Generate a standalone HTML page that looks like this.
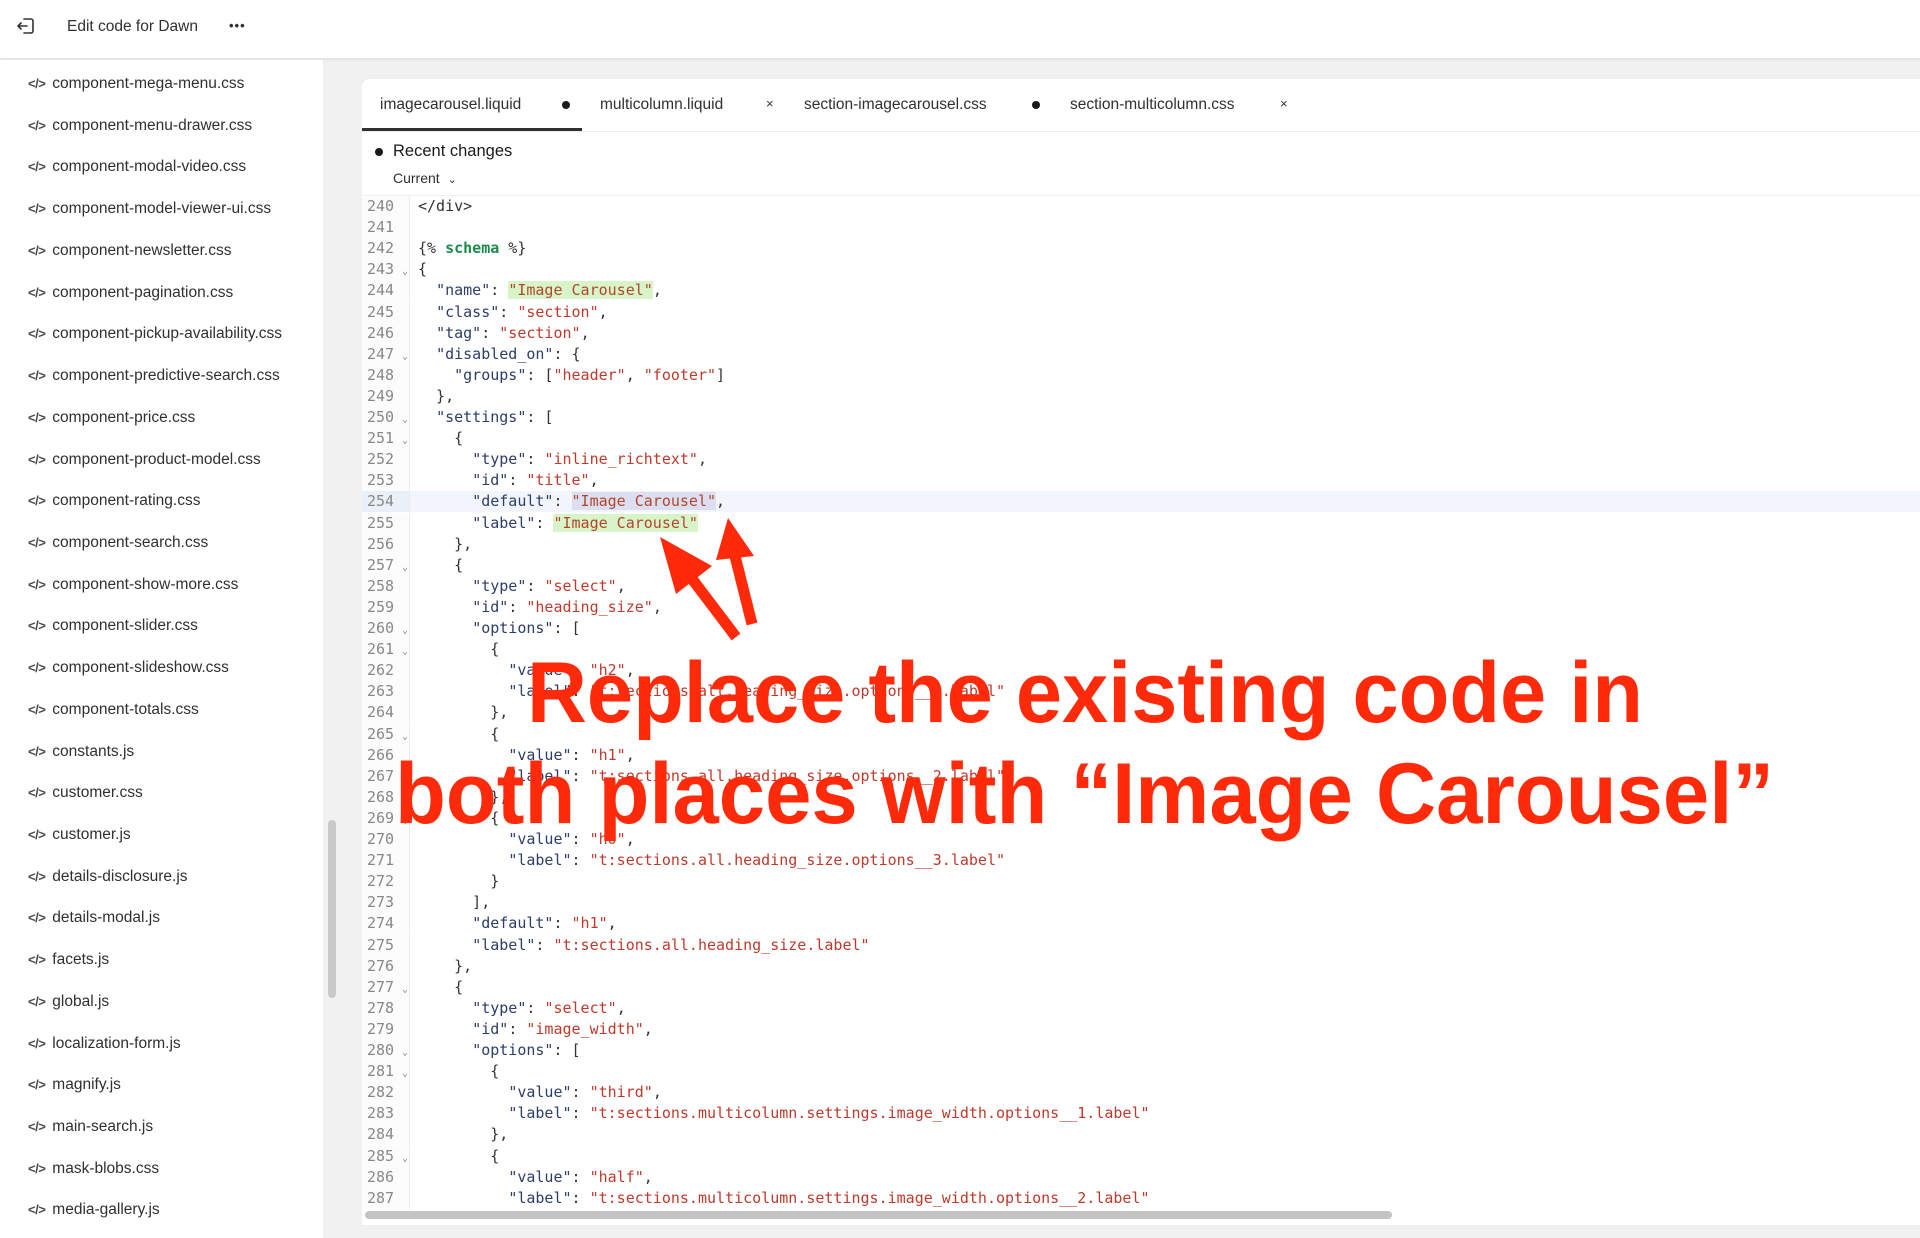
<!DOCTYPE html>
<html><head><meta charset="utf-8">
<style>
*{margin:0;padding:0;box-sizing:border-box}
body{width:1920px;height:1238px;position:relative;overflow:hidden;background:#f1f1f1;font-family:"Liberation Sans",Arial,sans-serif;color:#303030}
#top{position:absolute;left:0;top:0;width:1920px;height:59px;background:#fff;border-bottom:1px solid #e3e3e3;box-shadow:0 1px 3px rgba(0,0,0,.06)}
#side{position:absolute;left:0;top:60px;width:323px;height:1178px;background:#fff}
.it{position:absolute;left:28px;font-size:15.5px;color:#303030;white-space:nowrap;line-height:20px}
.it b{font-weight:bold;font-size:13px;color:#4a4a4a;margin-right:7px;letter-spacing:-0.5px}
#panel{position:absolute;left:362px;top:79px;width:1558px;height:1146px;background:#fff;border-radius:8px 0 0 0}
.tab{position:absolute;top:95px;font-size:15.5px;color:#303030;line-height:20px;white-space:nowrap}
.dot{position:absolute;width:8px;height:8px;border-radius:50%;background:#1a1a1a}
.x{position:absolute;top:96px;font-size:13px;color:#333}
#code{position:absolute;left:362px;top:196px;width:1558px;height:1015px;overflow:hidden}
.ln{position:absolute;left:0;width:1558px;height:21px;font-family:"DejaVu Sans Mono","Liberation Mono",monospace;font-size:15px;line-height:21px;white-space:pre;color:#333}
.n{position:absolute;left:0;width:48px;padding-left:5px;height:21px;color:#888;background:#fcfcfc;border-right:1px solid #ececec}
.f{position:absolute;left:40px;font-size:10px;color:#888;top:2px}
.c{position:absolute;left:56px}
.k{color:#2d3d6b}.s{color:#c0392b}.g{background:#d7f5c8;color:#b4452a}.h{background:#dcdff2;color:#b4452a}.sc{color:#1c8a4e;font-weight:bold}
</style></head><body>
<div id="top">
<svg style="position:absolute;left:16px;top:16px" width="20" height="20" viewBox="0 0 20 20" fill="none" stroke="#333" stroke-width="1.6" stroke-linecap="round" stroke-linejoin="round"><path d="M8 3h7a2 2 0 0 1 2 2v10a2 2 0 0 1-2 2H8"/><path d="M11 10H2M5 7l-3 3 3 3"/></svg>
<div style="position:absolute;left:67px;top:18px;font-size:15.5px;color:#303030">Edit code for Dawn</div>
<div style="position:absolute;left:229px;top:18px;font-size:13px;letter-spacing:1px;color:#333;font-weight:bold">•••</div>
</div>
<div id="side">
<div style="position:absolute;left:328px;top:760px;width:8px;height:178px;background:#c9c9c9;border-radius:4px"></div>
</div>
<div id="sideitems"></div>
<div id="panel"></div>
<div style="position:absolute;left:362px;top:131px;width:1558px;height:1px;background:#ececec"></div>
<div style="position:absolute;left:362px;top:128px;width:220px;height:3px;background:#303030"></div>
<div class="tab" style="left:380px">imagecarousel.liquid</div>
<div class="dot" style="left:562px;top:101px"></div>
<div class="tab" style="left:600px">multicolumn.liquid</div>
<div class="x" style="left:766px">×</div>
<div class="tab" style="left:804px">section-imagecarousel.css</div>
<div class="dot" style="left:1032px;top:101px"></div>
<div class="tab" style="left:1070px">section-multicolumn.css</div>
<div class="x" style="left:1280px">×</div>
<div class="dot" style="left:375px;top:148px"></div>
<div style="position:absolute;left:393px;top:142px;font-size:16.5px;color:#1a1a1a">Recent changes</div>
<div style="position:absolute;left:393px;top:170px;font-size:14px;color:#303030">Current <span style="font-size:11px;margin-left:4px">⌄</span></div>
<div style="position:absolute;left:362px;top:195px;width:1558px;height:1px;background:#f0f0f0"></div>
<div id="code"></div>
<div style="position:absolute;left:365px;top:1211px;width:1027px;height:8px;background:#c4c4c4;border-radius:4px"></div>
<svg style="position:absolute;left:0;top:0" width="1920" height="1238">
<g stroke="#ff2a0a" stroke-width="11" stroke-linecap="butt" fill="#ff2a0a">
<line x1="736" y1="637" x2="680" y2="563"/>
<polygon points="660,537 712,566 676,594" stroke="none"/>
<line x1="752" y1="624" x2="734" y2="552"/>
<polygon points="728,518 754,556 716,560" stroke="none"/>
</g>
<text x="527" y="722" textLength="1116" lengthAdjust="spacingAndGlyphs" font-family="Liberation Sans,Arial,sans-serif" font-weight="bold" font-size="86" fill="#ff2a0a">Replace the existing code in</text>
<text x="395" y="823" textLength="1379" lengthAdjust="spacingAndGlyphs" font-family="Liberation Sans,Arial,sans-serif" font-weight="bold" font-size="86" fill="#ff2a0a">both places with “Image Carousel”</text>
</svg>
<script>
var files=["component-mega-menu.css","component-menu-drawer.css","component-modal-video.css","component-model-viewer-ui.css","component-newsletter.css","component-pagination.css","component-pickup-availability.css","component-predictive-search.css","component-price.css","component-product-model.css","component-rating.css","component-search.css","component-show-more.css","component-slider.css","component-slideshow.css","component-totals.css","constants.js","customer.css","customer.js","details-disclosure.js","details-modal.js","facets.js","global.js","localization-form.js","magnify.js","main-search.js","mask-blobs.css","media-gallery.js"];
var h="";files.forEach(function(f,i){h+='<div class="it" style="top:'+(83+i*41.72-9).toFixed(1)+'px"><b>&lt;/&gt;</b>'+f+'</div>';});
document.getElementById("sideitems").innerHTML=h;
function K(t){return '<span class="k">"'+t+'"</span>';}
function S(t){return '<span class="s">"'+t+'"</span>';}
var L=[
['&lt;/div&gt;'],[''],['{% <span class="sc">schema</span> %}'],['{',1],
['  '+K('name')+': <span class="g">"Image Carousel"</span>,'],
['  '+K('class')+': '+S('section')+','],
['  '+K('tag')+': '+S('section')+','],
['  '+K('disabled_on')+': {',1],
['    '+K('groups')+': ['+S('header')+', '+S('footer')+']'],
['  },'],
['  '+K('settings')+': [',1],
['    {',1],
['      '+K('type')+': '+S('inline_richtext')+','],
['      '+K('id')+': '+S('title')+','],
['      '+K('default')+': <span class="h">"Image Carousel"</span>,',0,1],
['      '+K('label')+': <span class="g">"Image Carousel"</span>'],
['    },'],['    {',1],
['      '+K('type')+': '+S('select')+','],
['      '+K('id')+': '+S('heading_size')+','],
['      '+K('options')+': [',1],
['        {',1],
['          '+K('value')+': '+S('h2')+','],
['          '+K('label')+': '+S('t:sections.all.heading_size.options__1.label')],
['        },'],['        {',1],
['          '+K('value')+': '+S('h1')+','],
['          '+K('label')+': '+S('t:sections.all.heading_size.options__2.label')],
['        },'],['        {',1],
['          '+K('value')+': '+S('h0')+','],
['          '+K('label')+': '+S('t:sections.all.heading_size.options__3.label')],
['        }'],['      ],'],
['      '+K('default')+': '+S('h1')+','],
['      '+K('label')+': '+S('t:sections.all.heading_size.label')],
['    },'],['    {',1],
['      '+K('type')+': '+S('select')+','],
['      '+K('id')+': '+S('image_width')+','],
['      '+K('options')+': [',1],
['        {',1],
['          '+K('value')+': '+S('third')+','],
['          '+K('label')+': '+S('t:sections.multicolumn.settings.image_width.options__1.label')],
['        },'],['        {',1],
['          '+K('value')+': '+S('half')+','],
['          '+K('label')+': '+S('t:sections.multicolumn.settings.image_width.options__2.label')]
];
var c="";L.forEach(function(l,i){
c+='<div class="ln" style="top:'+(i*21.1).toFixed(1)+'px;'+(l[2]?'background:#f2f6fc':'')+'"><span class="n"'+(l[2]?' style="background:#eaf0f8"':'')+'>'+(240+i)+(l[1]?'<span class="f">⌄</span>':'')+'</span><span class="c">'+l[0]+'</span></div>';});
document.getElementById("code").innerHTML=c;
</script>
</body></html>
